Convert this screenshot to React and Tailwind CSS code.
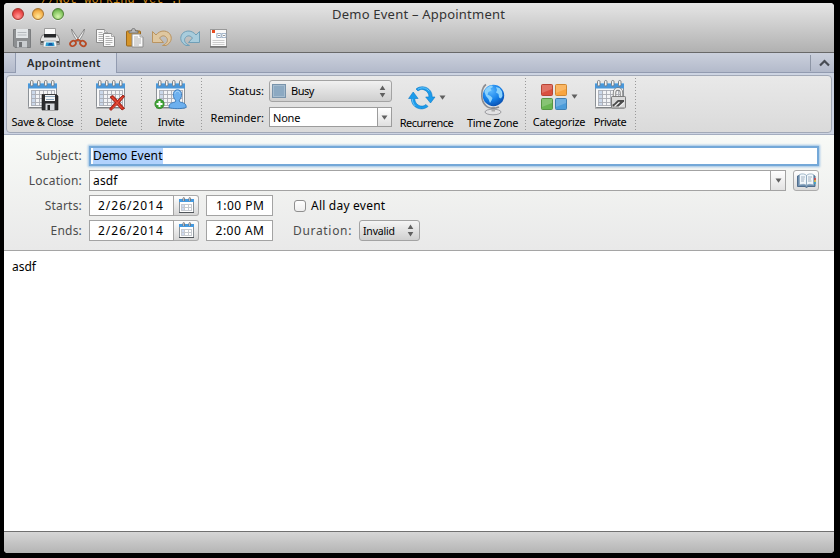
import React from "react";

function Calendar({ children }) {
  return (
    <svg width="32" height="32" viewBox="0 0 32 32" className="block shrink-0 overflow-visible">
      <rect x="1.500" y="4.500" width="28" height="23" rx="1" fill="#f9f9f9" stroke="#8c9196" />
      <path d="M1 27.500h29v1H1z" fill="#666" opacity=".7" />
      <rect x="1" y="3" width="29" height="5.500" fill="#4a97d9" />
      <path d="M1 3.500h29" stroke="#7dbbeb" />
      <rect x="4.500" y="10.500" width="22" height="15" fill="#f3f4f6" />
      <path d="M4.500 10.500h4v15h-4z" fill="#cbd8ea" />
      <path
        d="M4.500 10.500h23M4.500 14.500h23M4.500 18.500h23M4.500 22.500h23M4.500 25.500h23M4.500 10v16M8.500 10v16M12.500 10v16M16.500 10v16M20.500 10v16M24.500 10v16M27.500 10v16"
        stroke="#a9adb4"
        strokeWidth=".9"
        fill="none"
      />
      {[4, 11, 18, 25].map((x) => (
        <rect key={x} x={x - 0.5} y=".5" width="2.500" height="5.500" rx="1.200" fill="#f6f6f6" stroke="#73777b" strokeWidth=".9" />
      ))}
      {children}
    </svg>
  );
}

function SaveCloseIcon() {
  return (
    <Calendar>
      <path d="M15 14.500h14.500l1.500 1.500v14H15z" fill="#2c2c2e" stroke="#1d1d1d" strokeWidth=".6" />
      <rect x="18" y="15" width="10" height="6" fill="#f4f5f7" />
      <path d="M18 16.500h10M19 19.500h8" stroke="#8fa9bd" />
      <rect x="18.500" y="23.500" width="9" height="6.500" fill="#d4d6da" />
      <rect x="20.500" y="25" width="2.500" height="5" fill="#222" />
    </Calendar>
  );
}

function DeleteIcon() {
  return (
    <Calendar>
      <path d="M15 17l3-1.500 4.500 5 5.500-5.500 1.500 1.500-5 6 5 6-2.500 1.500-5-5.500-6 6-1.500-1.500 5.500-6.500z" fill="#cf2e1e" stroke="#8f1a10" strokeWidth=".8" />
      <path d="M17 17l10 11.500M27.500 17l-10 11.500" stroke="#ee6a50" strokeWidth=".7" />
    </Calendar>
  );
}

function InviteIcon() {
  return (
    <Calendar>
      <path d="M14 27.500c0-4 2-4.500 6-5.500 1-.5 1-1.500 0-2.500-1.500-1.500-2-4-1.500-6 .5-5 7.500-5 8 0 .3 2.500-.3 4.500-1.600 6-1 1-.8 2 .3 2.500 4 1 6 1.500 6 5.500-4 1.500-14 1.500-17.200 0z" fill="#6db0ee" stroke="#3576b8" strokeWidth=".9" />
      <path d="M20 13.500c.5-3 4.500-3 5 0" stroke="#b0d9fb" fill="none" />
      <circle cx="4.500" cy="24" r="4.600" fill="#3fa535" stroke="#27801f" strokeWidth=".8" />
      <path d="M4.500 21v6M1.500 24h6" stroke="#fff" strokeWidth="2" />
    </Calendar>
  );
}

function PrivateIcon() {
  return (
    <Calendar>
      <path d="M20.500 18v-5c0-5.500 7-5.500 7 0v5" fill="none" stroke="#777" strokeWidth="3.400" />
      <path d="M20.500 18v-5c0-5.500 7-5.500 7 0v5" fill="none" stroke="#eee" strokeWidth="1.700" />
      <rect x="17.500" y="16.500" width="14" height="11.500" rx=".7" fill="#dadada" stroke="#7d7d7d" />
      <path d="M18.500 26.500v-2c3-1 3.500-4 6-4.500h5.500v2l-4 4.500z" fill="#4b4b4b" />
      <path d="M20.500 26.500l5-4.500M25 27l5-4.500" stroke="#eee" strokeWidth="1.200" />
    </Calendar>
  );
}

function RecurrenceIcon() {
  return (
    <svg width="28" height="28" viewBox="0 0 28 28" className="block">
      <g fill="#1c9cec" stroke="#0c79c8" strokeWidth=".6">
        <path d="M8 5C12 1.500 19 2 22.500 7c1.200 1.800 1.700 4 1.700 6h2.800l-4.500 6-4.800-6h3.200c0-2-.5-3.500-1.700-5C16.500 5 12.500 4.500 10 7z" />
        <path d="M20 22.500c-4.500 3.800-11.500 3-15-2C3.800 18.700 3.300 16.500 3.300 14.500H.6L5.200 8l4.900 6.500H6.800c0 2 .5 3.500 1.700 5 2.500 3 6.700 3.500 9.500 1z" />
      </g>
      <path d="M10 5.200c4-2.500 8.500-1.500 11.200 2M4.300 15c0 3 1.200 5.500 3 7" stroke="#67c4fb" fill="none" />
    </svg>
  );
}

function GlobeIcon() {
  return (
    <svg width="26" height="33" viewBox="0 0 26 33" className="block">
      <defs>
        <radialGradient id="sea" cx=".38" cy=".28" r=".8">
          <stop offset="0" stopColor="#5ab8ff" />
          <stop offset=".55" stopColor="#147fe8" />
          <stop offset="1" stopColor="#0747a6" />
        </radialGradient>
      </defs>
      <ellipse cx="13" cy="29" rx="8" ry="2.800" fill="#e2e2e4" stroke="#8b8b90" strokeWidth=".8" />
      <path d="M11.500 24h3.500v4.500h-3.500z" fill="#aaa" />
      <path d="M6 1.500C1 5 .5 15 4 20.500S14 26 19 24" fill="none" stroke="#8c8d92" strokeWidth="1.600" />
      <circle cx="13.500" cy="12.500" r="10.700" fill="url(#sea)" />
      <path d="M5 7c2-3 5-4.500 7-4.500l1 1.500-2.500 1.500 1 2-3 1.500-1 2.500 3 1.500 2 2-1 2.500-1.500 2.500-1.500-4-2.500-3-1.500-4zM16 4l3.500 1 2.500 3.500.5 4.500-1.500 2.500-2-1-.5-3.500-2.500-1.500 1-2.500z" fill="#8bd2fc" />
    </svg>
  );
}

function CategorizeIcon() {
  return (
    <svg width="26" height="26" viewBox="0 0 26 26" className="block">
      <rect x=".5" y=".5" width="11" height="11" rx="1" fill="#d9503f" stroke="#b64435" />
      <rect x="14.500" y=".5" width="11" height="11" rx="1" fill="#f9a53f" stroke="#cf8731" />
      <rect x=".5" y="14.500" width="11" height="11" rx="1" fill="#69b552" stroke="#579544" />
      <rect x="14.500" y="14.500" width="11" height="11" rx="1" fill="#4c9cda" stroke="#3f7fb3" />
      <g fill="#fff" opacity=".2">
        <path d="M1 1h10v4L1 9zM15 1h10v4l-10 4zM1 15h10v4L1 23zM15 15h10v4l-10 4z" />
      </g>
    </svg>
  );
}

function DiskIcon() {
  return (
    <svg width="18" height="19" viewBox="0 0 18 19" className="block">
      <path d="M.5.500h17v18H2l-1.500-1.500z" fill="#8d8f91" stroke="#7b7d7f" />
      <rect x="3" y="0" width="12" height="9" fill="#e3e6e8" />
      <path d="M4.500 3.500h9M4.500 6h9" stroke="#b5b9bd" />
      <rect x="4" y="12" width="10" height="6.500" fill="#c9cccf" />
      <rect x="6" y="13" width="3" height="5" fill="#727477" />
    </svg>
  );
}

function PrinterIcon() {
  return (
    <svg width="20" height="20" viewBox="0 0 20 20" className="block">
      <path d="M4.500 9V.5h11V9" fill="#fafafa" stroke="#9b9b9b" />
      <path d="M2.500 7h15l2 4v5.500H.5V11z" fill="#e4e4e4" stroke="#858585" />
      <path d="M4 6h12v3.500H4z" fill="#26282a" />
      <rect x="1" y="13" width="18" height="2.500" fill="#55585a" />
      <path d="M4 13h12l1 6H3z" fill="#f3f8fb" stroke="#999" strokeWidth=".7" />
      <path d="M6 14.500h8l.5 3.500h-9z" fill="#2f9fd0" />
      <path d="M9 15h3l1 2.500H8z" fill="#1657a0" />
    </svg>
  );
}

function ScissorsIcon() {
  return (
    <svg width="18" height="20" viewBox="0 0 18 20" className="block">
      <path d="M2.500 1l7.500 11-1.500 1.500C5.500 9 3 6 2.500 1z" fill="#eee" stroke="#777" strokeWidth=".8" />
      <path d="M15.500 1L8 12l1.500 1.500C12.500 9 15 6 15.500 1z" fill="#f5f5f5" stroke="#777" strokeWidth=".8" />
      <g fill="none" stroke="#b74a25" strokeWidth="1.800">
        <ellipse cx="4" cy="15.500" rx="3" ry="2.500" transform="rotate(-35 4 15.500)" />
        <ellipse cx="14" cy="15.500" rx="3" ry="2.500" transform="rotate(35 14 15.500)" />
        <path d="M6 13.500l3-2 3 2" />
      </g>
    </svg>
  );
}

function Sheet({ x, y }) {
  return (
    <g transform={`translate(${x} ${y})`}>
      <path d="M.5.500h8l3 3v10H.5z" fill="#fafafa" stroke="#8c8c8c" />
      <path d="M8.500.500v3h3" fill="#ddd" stroke="#999" strokeWidth=".8" />
      <path d="M2.500 3.500h4M2.500 5.500h7M2.500 7.500h7M2.500 9.500h7M2.500 11.500h5" stroke="#b2b2b2" />
    </g>
  );
}

function CopyIcon() {
  return (
    <svg width="20" height="19" viewBox="0 0 20 19" className="block">
      <Sheet x={0} y={0} />
      <Sheet x={7} y={4} />
    </svg>
  );
}

function PasteIcon() {
  return (
    <svg width="18" height="20" viewBox="0 0 18 20" className="block">
      <rect x=".5" y="3" width="14" height="15" rx="1" fill="#d5952a" stroke="#9b671a" />
      <path d="M3 5V3h2.500c0-3.500 4-3.500 4 0H12v2z" fill="#b8b8b8" stroke="#666" strokeWidth=".8" />
      <Sheet x={5.500} y={5.500} />
    </svg>
  );
}

function UndoIcon({ redo }) {
  return (
    <svg width="20" height="16" viewBox="0 0 20 16" className={redo ? "block -scale-x-100" : "block"}>
      <path
        d="M.5 1.500L4 5C8 0 14 0 17.500 3.500 21 8 19 13 14 15.500h-3.500c5-2 6-5.500 4-8C12.500 5 9.500 5.500 7.500 8l4 4.500H.500z"
        fill={redo ? "#a8ccdc" : "#dfc7a0"}
        stroke={redo ? "#709fb7" : "#ba9460"}
      />
    </svg>
  );
}

function AgendaIcon() {
  return (
    <svg width="17" height="19" viewBox="0 0 17 19" className="block">
      <rect x=".5" y=".5" width="16" height="17" fill="#fafafa" stroke="#999" />
      <path d="M0 18h17" stroke="#555" />
      <rect x="1" y="4" width="15" height="5" fill="#d9dce0" />
      <rect x="1" y="3.500" width="5" height="6" fill="#fff" />
      <path d="M2 1h3v3H2z" fill="#e84b20" />
      <path d="M7 4.500h4v4H7zM12 4.500h4v4h-4z" fill="#fff" stroke="#8ba4be" strokeWidth=".7" />
      <path d="M8.500 6.500h1M13.500 6.500h1" stroke="#333" />
      <path d="M2.500 11.500h12M2.500 13.500h12M2.500 15.500h12" stroke="#ccc" />
    </svg>
  );
}

function SmallCalendarIcon() {
  return (
    <svg width="17" height="17" viewBox="0 0 17 17" className="block">
      <rect x="1.500" y="2.500" width="14" height="13" fill="#fff" stroke="#8b9298" />
      <path d="M1 15.500h15" stroke="#50555a" />
      <rect x="1" y="2" width="15" height="3" fill="#459ae0" />
      <path d="M3 7h3v7H3z" fill="#cfdbf2" />
      <path d="M3 7.500h11M3 10.500h11M3 13.500h11M3.500 7v7M6.500 7v7M10.500 7v7M13.500 7v7" stroke="#c6cad0" />
      <path d="M5 4V1.300c0-1 1.500-1 1.500 0V4M11 4V1.300c0-1 1.500-1 1.500 0V4" fill="#eee" stroke="#6d7278" strokeWidth=".9" />
    </svg>
  );
}

function BookIcon() {
  return (
    <svg width="19" height="16" viewBox="0 0 19 16" className="block">
      <path d="M.5 3l2-.5h14l1.500.5v10.500h-7L9.500 14.500 8 13.500H.5z" fill="#6f8fb0" stroke="#4f6d8c" />
      <path d="M2.500 1.500C5 .5 8 .7 9.500 2.500v10C8 11 5 11 2.500 12zM16.500 1.500C14 .5 11 .7 9.500 2.500v10c1.500-1.500 4.500-1.500 7-.5z" fill="#f2f7fb" stroke="#8fa9bf" strokeWidth=".8" />
      <path d="M4 4h4M4 6h3.500M4 8h3M11 4h4M11 6h3M11 8h3.500" stroke="#8da0b3" strokeWidth=".8" />
      <path d="M18 5v2" stroke="#e23e36" strokeWidth="1.500" />
      <path d="M18 7v2" stroke="#efba33" strokeWidth="1.500" />
      <path d="M18 9v2" stroke="#33a9ce" strokeWidth="1.500" />
    </svg>
  );
}

function Updown() {
  return (
    <svg width="7" height="13" viewBox="0 0 7 13" className="block shrink-0">
      <path d="M3.500 .5L6.300 5H.7zM3.500 12.500L.7 8h5.600z" fill="#606060" />
    </svg>
  );
}

function Down() {
  return (
    <svg width="7" height="5" viewBox="0 0 7 5" className="block shrink-0">
      <path d="M.500.500h6L3.500 4.700z" fill="#606060" />
    </svg>
  );
}

const Separator = ({ className }) => (
  <div className={`mt-[2px] h-[54px] w-px shrink-0 bg-[repeating-linear-gradient(to_bottom,#999_0px,#999_1px,transparent_1px,transparent_3px)] ${className}`} />
);

function Action({ label, className, labelClass = "", children }) {
  return (
    <div className={`flex h-full shrink-0 flex-col items-center whitespace-nowrap text-[11px] leading-[14px] ${className}`}>
      <div className="flex h-[39px] items-start justify-center pt-[4px]">{children}</div>
      <div className={labelClass}>{label}</div>
    </div>
  );
}

function Light({ className }) {
  return <div className={`size-3 rounded-full border shadow-[0_1px_0_#fff8] ${className}`} />;
}

const FieldLabel = ({ children }) => (
  <div className="mr-[7px] w-[78px] shrink-0 text-right text-[12px] tracking-[0.2px] text-[#4c4c4c]">{children}</div>
);

function DateRow({ label, time, children }) {
  return (
    <div className="flex h-[21px] items-center">
      <FieldLabel>{label}</FieldLabel>
      <div className="flex h-[21px] w-[85px] items-center border border-[#a3a3a3] bg-white pl-[8px] text-[12px] tracking-[0.980px]">
        2/26/2014
      </div>
      <div className="mr-[7px] flex h-[21px] w-[25px] items-center justify-center rounded-r-[3px] border border-l-0 border-[#ababab] bg-gradient-to-b from-white to-[#d6d6d6]">
        <SmallCalendarIcon />
      </div>
      <div className="flex h-[21px] w-[67px] items-center justify-end border border-[#a3a3a3] bg-white pr-[8px] text-[12px] tracking-[0.500px]">
        <span className="-mr-[0.500px]">{time}</span>
      </div>
      {children}
    </div>
  );
}

export default function App() {
  return (
    <div className="relative h-[558px] w-[840px] overflow-hidden bg-black pl-[4px] pt-[3px] font-['Noto_Sans','Open_Sans',sans-serif] text-black">
      <div className="absolute left-[41px] top-[-7px] whitespace-pre font-['Liberation_Mono',monospace] text-[12px] leading-[14px] text-[#c8861c]">
        //Not working yet :P
      </div>
      <div className="relative flex h-[550px] w-[830px] flex-col overflow-hidden rounded-[4px] bg-white">
        <header className="h-[50px] shrink-0 border-b border-[#686868] bg-gradient-to-b from-[#e6e6e6] to-[#b1b1b1]">
          <div className="flex h-[22px] items-center pl-[8px]">
            <div className="flex w-[52px] shrink-0 justify-between">
              <Light className="border-[#a5342e] bg-[radial-gradient(circle_at_50%_75%,#ff9b98,#ee4d4d_55%,#b92d2d)]" />
              <Light className="border-[#a87531] bg-[radial-gradient(circle_at_50%_75%,#ffe79a,#f5b04a_60%,#b97622)]" />
              <Light className="border-[#4f7f35] bg-[radial-gradient(circle_at_50%_75%,#d5f5ac,#83c560_60%,#468831)]" />
            </div>
            <div className="ml-[268px] whitespace-nowrap text-[13px] leading-[16px] tracking-[0.220px] text-[#333]">Demo Event – Appointment</div>
          </div>
          <div className="flex items-center pl-[9px] pt-[3px]">
            <DiskIcon />
            <div className="ml-[9px]"><PrinterIcon /></div>
            <div className="ml-[9px]"><ScissorsIcon /></div>
            <div className="ml-[9px]"><CopyIcon /></div>
            <div className="ml-[10px]"><PasteIcon /></div>
            <div className="ml-[8px]"><UndoIcon /></div>
            <div className="ml-[8px]"><UndoIcon redo /></div>
            <div className="ml-[10px] mt-px"><AgendaIcon /></div>
          </div>
        </header>

        <div className="flex h-[20px] shrink-0 bg-gradient-to-b from-[#cbd0dc] to-[#b2b9ca]">
          <div className="w-[11px] border-b border-[#929bb0]" />
          <div className="flex w-[102px] items-center border-x border-[#929bb0] bg-gradient-to-b from-[#d3d8e3] to-[#ced5e3] pl-[11px] text-[11px] font-semibold tracking-[0.250px] text-[#2c2c2c]">
            Appointment
          </div>
          <div className="flex flex-1 items-center justify-end border-b border-[#929bb0]">
            <div className="mr-[8px] h-[16px] w-px bg-[#8d95a5]" />
            <svg width="11" height="8" viewBox="0 0 11 8" className="mr-[4px] block">
              <path d="M1 6.500l4.500-4.500L10 6.500" fill="none" stroke="#484c54" strokeWidth="2.200" />
            </svg>
          </div>
        </div>

        <div className="h-[62px] shrink-0 border-b border-[#a4adbf] bg-[#cdd4e2] px-[2px] pt-[2px]">
          <div className="flex h-[58px] rounded-[4px] border border-[#a2a9b7] bg-gradient-to-b from-[#e9e9e9] to-[#dadada]">
            <Action label="Save & Close" className="w-[71px]" labelClass="tracking-[-0.320px]"><SaveCloseIcon /></Action>
            <Separator className="ml-[3px]" />
            <Action label="Delete" className="w-[58px]" labelClass="tracking-[-0.300px]"><DeleteIcon /></Action>
            <Separator className="ml-[1px]" />
            <Action label="Invite" className="w-[58px]" labelClass="tracking-[-0.450px]"><InviteIcon /></Action>
            <Separator className="ml-[1px]" />
            <div className="flex w-[194px] shrink-0 flex-col gap-[5px] pt-[4px] text-[11px] leading-[14px]">
              <div className="flex h-[22px] items-center">
                <div className="mr-[5px] w-[62px] text-right">Status:</div>
                <div className="flex h-[22px] w-[123px] items-center rounded-[3px] border border-[#a3a3a3] bg-gradient-to-b from-[#f1f1f1] to-[#cfcfcf] pl-[2px] pr-[5px]">
                  <div className="mr-[5px] size-[14px] border border-[#7893ab] bg-[#8ca9c2] shadow-[inset_0_0_0_1px_#a5bccf]" />
                  <div className="flex-1 tracking-[-0.500px]">Busy</div>
                  <Updown />
                </div>
              </div>
              <div className="flex h-[20px] items-center">
                <div className="mr-[5px] w-[62px] pt-[2px] text-right">Reminder:</div>
                <div className="flex h-[20px] w-[123px] items-center border border-[#9c9c9c] bg-white pl-[3px]">
                  <div className="flex-1 pt-[2px] tracking-[-0.200px]">None</div>
                  <div className="flex h-full w-[14px] items-center justify-center border-l border-[#9c9c9c] bg-gradient-to-b from-white to-[#e0e0e0]"><Down /></div>
                </div>
              </div>
            </div>
            <Action label="Recurrence" className="w-[61px]" labelClass="mt-[1px] tracking-[-0.480px]">
              <div className="flex pl-[1px] pt-[4px]">
                <RecurrenceIcon />
                <div className="ml-[3px] pt-[11px]"><Down /></div>
              </div>
            </Action>
            <Action label="Time Zone" className="ml-[4px] w-[63px]" labelClass="mt-[1px] tracking-[-0.350px]">
              <div className="pt-[3px]"><GlobeIcon /></div>
            </Action>
            <Separator className="ml-[1px]" />
            <Action label="Categorize" className="ml-[4px] w-[58px]" labelClass="tracking-[-0.300px]">
              <div className="flex pl-[1px] pt-[4px]">
                <CategorizeIcon />
                <div className="ml-[4px] pt-[10px]"><Down /></div>
              </div>
            </Action>
            <Action label="Private" className="ml-[2px] w-[40px]" labelClass="tracking-[-0.500px]"><PrivateIcon /></Action>
            <Separator className="ml-[5px]" />
          </div>
        </div>

        <main className="h-[116px] shrink-0 border-b border-[#a5a5a5] bg-gradient-to-b from-[#f8faf7] to-[#e9e9e9] pt-[10px] leading-[16px]">
          <div className="flex h-[22px] items-center">
            <FieldLabel>Subject:</FieldLabel>
            <div className="flex h-[20px] w-[730px] items-center border-2 border-[#74a8d8] bg-white pl-[2px] shadow-[0_0_2px_1px_#9bc2e5]">
              <span className="bg-[#b1d2fd] text-[12px] tracking-[0.120px]">Demo Event</span>
            </div>
          </div>
          <div className="mt-[3px] flex h-[21px] items-center">
            <FieldLabel>Location:</FieldLabel>
            <div className="flex h-[21px] w-[697px] items-center border border-[#a3a3a3] bg-white pl-[3px] text-[12px]">
              <div className="flex-1 pt-px tracking-[0.150px]">asdf</div>
              <div className="flex h-full w-[15px] items-center justify-center border-l border-[#a3a3a3] bg-gradient-to-b from-white to-[#e2e2e2]"><Down /></div>
            </div>
            <div className="ml-[7px] flex h-[21px] w-[26px] items-center justify-center rounded-[3px] border border-[#ababab] bg-gradient-to-b from-white to-[#dadada]"><BookIcon /></div>
          </div>
          <div className="mt-[4px]">
            <DateRow label="Starts:" time="1:00 PM">
              <div className="ml-[21px] size-[12px] rounded-[3px] border border-[#8f8f8f] bg-gradient-to-b from-white to-[#eee]" />
              <div className="ml-[5px] text-[12px] tracking-[0.220px]">All day event</div>
            </DateRow>
          </div>
          <div className="mt-[4px]">
            <DateRow label="Ends:" time="2:00 AM">
              <div className="ml-[20px] w-[66px] text-[12px] tracking-[0.680px] text-[#4c4c4c]">Duration:</div>
              <div className="flex h-[21px] w-[61px] items-center justify-between rounded-[3px] border border-[#a3a3a3] bg-gradient-to-b from-[#f5f5f5] to-[#d0d0d0] pl-[3px] pr-[5px] text-[10.500px] tracking-[-0.200px]">
                Invalid <Updown />
              </div>
            </DateRow>
          </div>
        </main>

        <div className="flex-1 bg-white pl-[8px] pt-[8px] text-[12px] leading-[16px]">asdf</div>
        <footer className="h-[22px] shrink-0 border-t border-[#707070] bg-gradient-to-b from-[#d6d6d6] to-[#b4b4b4]" />
      </div>
    </div>
  );
}
